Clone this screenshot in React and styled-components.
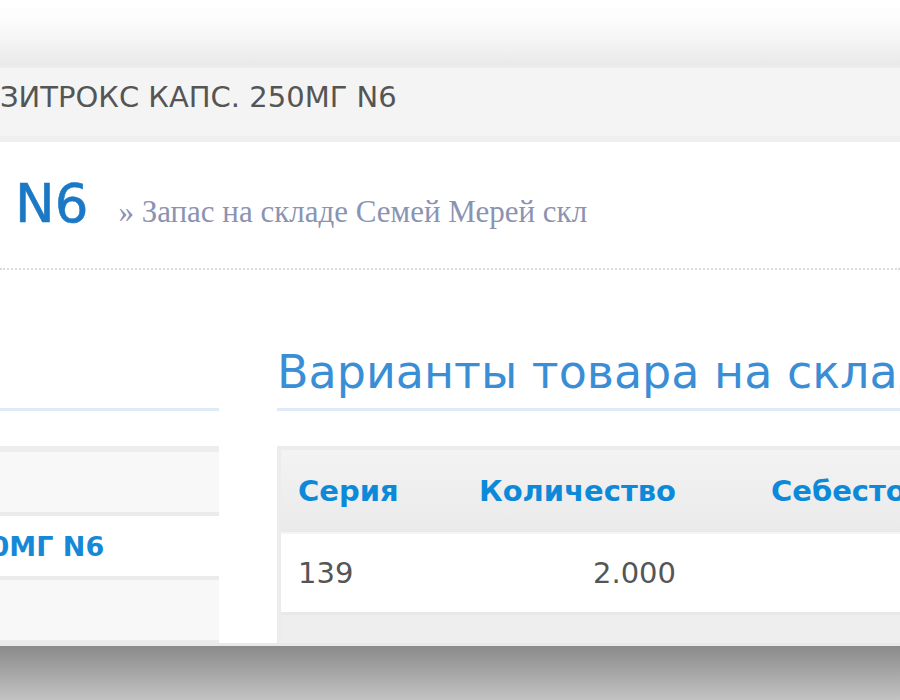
import React from 'react';
import styled, { createGlobalStyle } from 'styled-components';

const GlobalStyle = createGlobalStyle`
  html, body {
    margin: 0;
    padding: 0;
    background: #ffffff;
    overflow: hidden;
  }
  body {
    font-family: "DejaVu Sans", Verdana, sans-serif;
  }
`;

const Screen = styled.div`
  width: 900px;
  height: 700px;
  display: flex;
  flex-direction: column;
  overflow: hidden;
`;

const Viewport = styled.div`
  height: 643px;
  flex-shrink: 0;
  overflow: hidden;
  background: #ffffff;
`;

const TopFade = styled.div`
  height: 65px;
  background: linear-gradient(#ffffff 0%, #fdfdfd 25%, #f4f4f4 65%, #e9e9e9 100%);
`;

const Crumbs = styled.div`
  box-sizing: border-box;
  height: 77px;
  padding: 15px 0 24px 0;
  background: #f4f4f4;
  border-top: 3px solid #ececec;
  border-bottom: 6px solid #efefef;
  font-size: 29px;
  line-height: 1;
  color: #555555;
  white-space: nowrap;
`;

const TitleRow = styled.div`
  box-sizing: border-box;
  height: 128px;
  padding: 35px 0 0 15px;
  display: flex;
  align-items: baseline;
  gap: 30px;
  border-bottom: 2px dotted #dcdcdc;
  white-space: nowrap;
`;

const Title = styled.h1`
  margin: 0;
  font-size: 53px;
  line-height: 1;
  font-weight: normal;
  color: #1b78c5;
  -webkit-text-stroke: 0.6px #1b78c5;
`;

const Sub = styled.span`
  font-family: "Liberation Serif", "Times New Roman", serif;
  font-size: 31px;
  color: #8b93b2;
`;

const Columns = styled.div`
  display: flex;
  gap: 58px;
`;

const Side = styled.div`
  width: 219px;
  flex-shrink: 0;
`;

const Main = styled.div`
  flex: 1;
  min-width: 0;
`;

const SectionHead = styled.h2`
  box-sizing: border-box;
  height: 141px;
  margin: 0 0 35px 0;
  padding: 79px 0 14px 0;
  border-bottom: 3px solid #e0ebf7;
  font-size: 46px;
  line-height: 1;
  font-weight: normal;
  color: #3a8ed5;
  white-space: nowrap;
`;

const List = styled.div`
  border-top: 6px solid #ededed;
`;

const ListRow = styled.div`
  height: 60px;
  display: flex;
  align-items: center;
  background: ${p => (p.$odd ? '#f8f8f8' : '#ffffff')};
  border-bottom: 4px solid #ebebeb;
  overflow: hidden;
`;

const ItemLink = styled.a`
  font-size: 27px;
  font-weight: bold;
  color: #1589d8;
  text-decoration: none;
  white-space: nowrap;
  text-indent: -47px;
`;

const Table = styled.div`
  border-top: 4px solid #ececec;
  border-left: 4px solid #ececec;
  width: 900px;
`;

const Row = styled.div`
  display: grid;
  grid-template-columns: 180px 236px 1fr;
  align-items: center;
  height: ${p => (p.$head ? '82px' : '78px')};
  background: ${p =>
    p.$head
      ? 'linear-gradient(#f3f3f3, #eaeaea)'
      : p.$odd
      ? '#eeeeee'
      : '#ffffff'};
  border-bottom: ${p => (p.$head ? '2px solid #f5f5f5' : '3px solid #e8e8e8')};
`;

const Cell = styled.div`
  padding: ${p => (p.$right ? '0 21px 0 17px' : p.$wide ? '0 0 0 74px' : '0 0 0 17px')};
  text-align: ${p => (p.$right ? 'right' : 'left')};
  white-space: nowrap;
  font-size: 29px;
  font-weight: ${p => (p.$head ? 'bold' : 'normal')};
  color: ${p => (p.$head ? '#0c8ad9' : '#555555')};
`;

const Shade = styled.div`
  flex: 1;
  border-top: 3px solid #e9e9e9;
  background: linear-gradient(#8a8a8a, #c3c3c3);
`;

const items = ['', 'АЗИТРОКС КАПС. 250МГ N6', ''];

const batches = [
  { series: '139', qty: '2.000' },
  { series: '140', qty: '1.000' },
];

function App() {
  return (
    <Screen>
      <GlobalStyle />
      <Viewport>
        <TopFade />
        <Crumbs>ЗИТРОКС КАПС. 250МГ N6</Crumbs>
        <TitleRow>
          <Title>N6</Title>
          <Sub>» Запас на складе Семей Мерей скл</Sub>
        </TitleRow>
        <Columns>
          <Side>
            <SectionHead />
            <List>
              {items.map((name, i) => (
                <ListRow key={i} $odd={i % 2 === 0}>
                  {name && <ItemLink href="#">250МГ N6</ItemLink>}
                </ListRow>
              ))}
            </List>
          </Side>
          <Main>
            <SectionHead>Варианты товара на складе</SectionHead>
            <Table>
              <Row $head>
                <Cell $head>Серия</Cell>
                <Cell $head $right>Количество</Cell>
                <Cell $head $wide>Себестоимость</Cell>
              </Row>
              {batches.map((b, i) => (
                <Row key={b.series} $odd={i % 2 === 1}>
                  <Cell>{b.series}</Cell>
                  <Cell $right>{b.qty}</Cell>
                  <Cell $wide />
                </Row>
              ))}
            </Table>
          </Main>
        </Columns>
      </Viewport>
      <Shade />
    </Screen>
  );
}

export default App;
